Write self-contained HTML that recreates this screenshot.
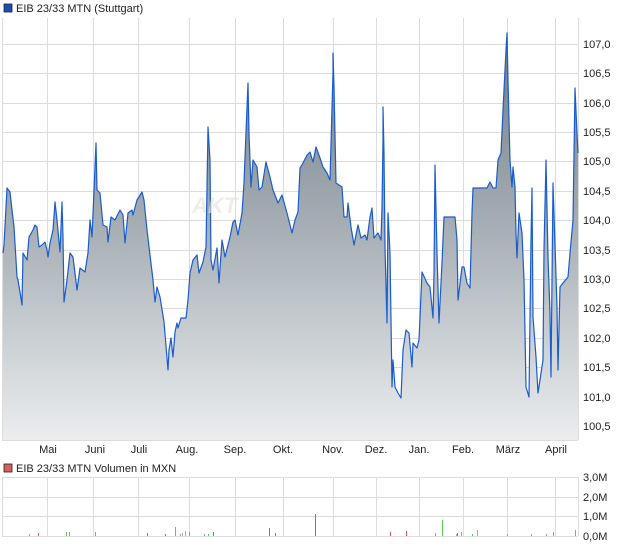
<!DOCTYPE html>
<html><head><meta charset="utf-8"><style>
body{margin:0;background:#fff;width:620px;height:546px;overflow:hidden;font-family:"Liberation Sans",sans-serif}
svg{display:block}
text{font-family:"Liberation Sans",sans-serif;font-size:11px;fill:#222}
</style></head><body>
<svg width="620" height="546" viewBox="0 0 620 546">
<defs><linearGradient id="g" x1="0" y1="30" x2="0" y2="440" gradientUnits="userSpaceOnUse">
<stop offset="0" stop-color="#6f7b83"/><stop offset="0.45" stop-color="#a2abb1"/><stop offset="1" stop-color="#ebedef"/></linearGradient></defs>
<rect x="4" y="4" width="8" height="8" fill="#1a4fb3" stroke="#222" stroke-width="0.8"/>
<text x="16" y="12">EIB 23/33 MTN (Stuttgart)</text>
<g stroke="#dcdcdc" stroke-width="1">
<line x1="2.5" y1="18" x2="2.5" y2="440"/>
<line x1="47.5" y1="18" x2="47.5" y2="440"/><line x1="93.5" y1="18" x2="93.5" y2="440"/><line x1="138.5" y1="18" x2="138.5" y2="440"/><line x1="189.5" y1="18" x2="189.5" y2="440"/><line x1="235.5" y1="18" x2="235.5" y2="440"/><line x1="283.5" y1="18" x2="283.5" y2="440"/><line x1="333.5" y1="18" x2="333.5" y2="440"/><line x1="376.5" y1="18" x2="376.5" y2="440"/><line x1="419.5" y1="18" x2="419.5" y2="440"/><line x1="463.5" y1="18" x2="463.5" y2="440"/><line x1="507.5" y1="18" x2="507.5" y2="440"/><line x1="555.5" y1="18" x2="555.5" y2="440"/><line x1="578.5" y1="18" x2="578.5" y2="440"/>
<line x1="2" y1="44.5" x2="578" y2="44.5"/><line x1="2" y1="73.5" x2="578" y2="73.5"/><line x1="2" y1="103.5" x2="578" y2="103.5"/><line x1="2" y1="132.5" x2="578" y2="132.5"/><line x1="2" y1="161.5" x2="578" y2="161.5"/><line x1="2" y1="191.5" x2="578" y2="191.5"/><line x1="2" y1="220.5" x2="578" y2="220.5"/><line x1="2" y1="250.5" x2="578" y2="250.5"/><line x1="2" y1="279.5" x2="578" y2="279.5"/><line x1="2" y1="308.5" x2="578" y2="308.5"/><line x1="2" y1="338.5" x2="578" y2="338.5"/><line x1="2" y1="367.5" x2="578" y2="367.5"/><line x1="2" y1="397.5" x2="578" y2="397.5"/><line x1="2" y1="426.5" x2="578" y2="426.5"/><line x1="2" y1="440.5" x2="578" y2="440.5"/>
</g>
<polygon fill="url(#g)" points="3,440 3,253 4,245 7,188 10,192 12,210 14,227 16,260 17,277 18,280 20,292 22,305 23,253 27,260 29,237 33,230 35,225 37,227 39,247 42,245 45,242 47,250 48,257 50,243 53,230 55,202 57,220 60,252 62,202 63,237 64,302 67,280 70,253 73,257 77,290 80,268 85,272 88,253 90,220 92,237 95,167 96,143 97,190 100,193 103,225 107,227 108,242 111,217 115,220 120,210 123,215 125,243 128,213 132,210 133,215 137,200 142,192 144,200 147,230 150,255 153,280 155,302 157,287 160,297 164,322 167,358 168,370 169,350 171,338 173,357 175,332 177,323 178,328 181,318 186,318 188,300 190,273 193,260 197,255 199,273 203,262 206,247 208,127 210,160 211,260 213,270 217,248 219,283 222,240 225,257 230,237 233,222 235,220 238,235 242,213 244,183 247,107 248,83 249,133 251,187 253,160 257,167 259,190 262,187 266,162 270,177 273,190 278,203 282,195 287,213 292,233 295,220 298,212 300,168 303,163 307,155 310,152 313,162 316,147 320,158 323,167 327,173 330,180 333,73 333,53 334,87 336,183 342,187 344,217 347,217 348,203 351,227 354,245 358,225 361,238 365,235 367,240 370,217 372,208 374,238 378,233 381,240 382,207 383,140 383,107 384,153 385,247 387,323 388,213 390,253 392,387 393,360 395,387 398,393 401,398 403,350 406,330 409,333 412,367 413,343 417,348 419,340 422,272 427,283 430,287 433,318 434,273 435,165 437,253 439,323 442,263 444,217 455,217 457,240 458,300 462,267 464,267 467,283 470,288 472,213 473,188 487,188 490,182 493,188 496,188 498,160 501,153 503,110 506,50 507,33 508,80 510,160 512,187 513,167 515,187 516,233 517,258 519,213 522,233 524,280 526,387 529,397 531,240 532,188 533,317 536,357 538,393 540,380 543,360 544,250 546,160 548,257 550,313 551,377 553,183 557,307 558,370 560,287 563,283 568,277 570,253 573,220 575,88 577,133 578,153 578,440"/>
<polyline fill="none" stroke="#1a5ccc" stroke-width="1.2" stroke-linejoin="round" points="3,253 4,245 7,188 10,192 12,210 14,227 16,260 17,277 18,280 20,292 22,305 23,253 27,260 29,237 33,230 35,225 37,227 39,247 42,245 45,242 47,250 48,257 50,243 53,230 55,202 57,220 60,252 62,202 63,237 64,302 67,280 70,253 73,257 77,290 80,268 85,272 88,253 90,220 92,237 95,167 96,143 97,190 100,193 103,225 107,227 108,242 111,217 115,220 120,210 123,215 125,243 128,213 132,210 133,215 137,200 142,192 144,200 147,230 150,255 153,280 155,302 157,287 160,297 164,322 167,358 168,370 169,350 171,338 173,357 175,332 177,323 178,328 181,318 186,318 188,300 190,273 193,260 197,255 199,273 203,262 206,247 208,127 210,160 211,260 213,270 217,248 219,283 222,240 225,257 230,237 233,222 235,220 238,235 242,213 244,183 247,107 248,83 249,133 251,187 253,160 257,167 259,190 262,187 266,162 270,177 273,190 278,203 282,195 287,213 292,233 295,220 298,212 300,168 303,163 307,155 310,152 313,162 316,147 320,158 323,167 327,173 330,180 333,73 333,53 334,87 336,183 342,187 344,217 347,217 348,203 351,227 354,245 358,225 361,238 365,235 367,240 370,217 372,208 374,238 378,233 381,240 382,207 383,140 383,107 384,153 385,247 387,323 388,213 390,253 392,387 393,360 395,387 398,393 401,398 403,350 406,330 409,333 412,367 413,343 417,348 419,340 422,272 427,283 430,287 433,318 434,273 435,165 437,253 439,323 442,263 444,217 455,217 457,240 458,300 462,267 464,267 467,283 470,288 472,213 473,188 487,188 490,182 493,188 496,188 498,160 501,153 503,110 506,50 507,33 508,80 510,160 512,187 513,167 515,187 516,233 517,258 519,213 522,233 524,280 526,387 529,397 531,240 532,188 533,317 536,357 538,393 540,380 543,360 544,250 546,160 548,257 550,313 551,377 553,183 557,307 558,370 560,287 563,283 568,277 570,253 573,220 575,88 577,133 578,153"/>
<text x="192" y="213" style="font-size:22px;font-style:italic;font-weight:bold;fill:#e6e2dc;opacity:0.6">AKT</text>
<g>
<text x="583" y="48">107,0</text><text x="583" y="77">106,5</text><text x="583" y="107">106,0</text><text x="583" y="136">105,5</text><text x="583" y="165">105,0</text><text x="583" y="195">104,5</text><text x="583" y="224">104,0</text><text x="583" y="254">103,5</text><text x="583" y="283">103,0</text><text x="583" y="312">102,5</text><text x="583" y="342">102,0</text><text x="583" y="371">101,5</text><text x="583" y="401">101,0</text><text x="583" y="430">100,5</text>
</g>
<g text-anchor="middle">
<text x="48" y="453">Mai</text><text x="95" y="453">Juni</text><text x="139" y="453">Juli</text><text x="187" y="453">Aug.</text><text x="235" y="453">Sep.</text><text x="283" y="453">Okt.</text><text x="333" y="453">Nov.</text><text x="376" y="453">Dez.</text><text x="419" y="453">Jan.</text><text x="463" y="453">Feb.</text><text x="508" y="453">März</text><text x="556" y="453">April</text>
</g>
<rect x="4" y="464" width="8" height="8" fill="#d86060" stroke="#222" stroke-width="0.8"/>
<text x="16" y="472">EIB 23/33 MTN Volumen in MXN</text>
<g stroke="#dcdcdc" stroke-width="1">
<line x1="2.5" y1="477" x2="2.5" y2="536"/><line x1="47.5" y1="477" x2="47.5" y2="536"/><line x1="93.5" y1="477" x2="93.5" y2="536"/><line x1="138.5" y1="477" x2="138.5" y2="536"/><line x1="189.5" y1="477" x2="189.5" y2="536"/><line x1="235.5" y1="477" x2="235.5" y2="536"/><line x1="283.5" y1="477" x2="283.5" y2="536"/><line x1="333.5" y1="477" x2="333.5" y2="536"/><line x1="376.5" y1="477" x2="376.5" y2="536"/><line x1="419.5" y1="477" x2="419.5" y2="536"/><line x1="463.5" y1="477" x2="463.5" y2="536"/><line x1="507.5" y1="477" x2="507.5" y2="536"/><line x1="555.5" y1="477" x2="555.5" y2="536"/><line x1="578.5" y1="477" x2="578.5" y2="536"/>
<line x1="2" y1="477.5" x2="578" y2="477.5"/><line x1="2" y1="497.5" x2="578" y2="497.5"/><line x1="2" y1="516.5" x2="578" y2="516.5"/><line x1="2" y1="536.5" x2="578" y2="536.5"/>
</g>
<g stroke-width="1">
<path stroke="#5c5" d="M29.5 536v-2M66.5 536v-4M69.5 536v-4M95.5 536v-4M175.5 536v-9M180.5 536v-2M189.5 536v-4M204.5 536v-2M208.5 536v-2M442.5 536v-16M435.5 536v-3M461.5 536v-4M472.5 536v-2M507.5 536v-2M531.5 536v-2M546.5 536v-2M553.5 536v-4M575.5 536v-6"/>
<path stroke="#d55" d="M38.5 536v-3M147.5 536v-3M165.5 536v-2M213.5 536v-4M269.5 536v-8M275.5 536v-3M315.5 536v-22M390.5 536v-4M406.5 536v-5M457.5 536v-3"/>
<path stroke="#aaa" d="M182.5 536v-3M185.5 536v-5M456.5 536v-2M477.5 536v-6"/>
</g>
<text x="583" y="481">3,0M</text>
<text x="583" y="501">2,0M</text>
<text x="583" y="520">1,0M</text>
<text x="583" y="540">0,0M</text>
</svg>
</body></html>
